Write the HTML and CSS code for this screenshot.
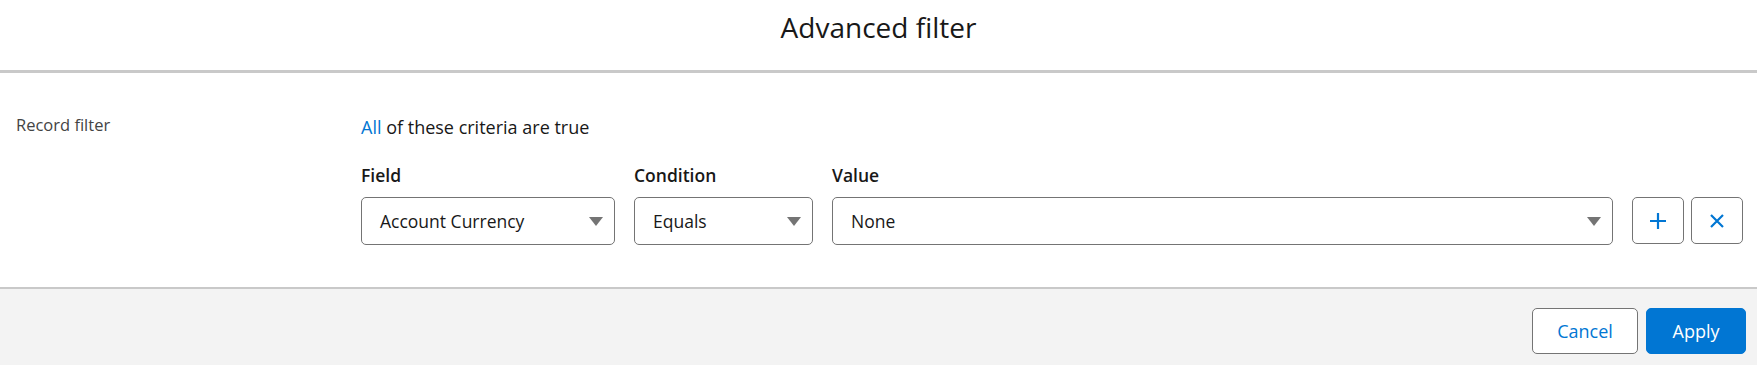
FILE: index.html
```html
<!DOCTYPE html>
<html lang="en">
<head>
    <meta charset="UTF-8">
    <title>Advanced filter</title>
    <link rel="stylesheet" href="styles.css">
</head>
<body>
    <div class="modal-header">
        <h1>Advanced filter</h1>
    </div>

    <div class="modal-body">
        <div class="section-label">Record filter</div>
        <div class="filter-content">
            <div class="logic-line"><a href="#" class="logic-link">All</a> of these criteria are true</div>
            <div class="criteria-row">
                <div class="field-group field-col">
                    <label>Field</label>
                    <div class="select-box">
                        <span>Account Currency</span>
                        <span class="caret"></span>
                    </div>
                </div>
                <div class="field-group condition-col">
                    <label>Condition</label>
                    <div class="select-box">
                        <span>Equals</span>
                        <span class="caret"></span>
                    </div>
                </div>
                <div class="field-group value-col">
                    <label>Value</label>
                    <div class="select-box">
                        <span>None</span>
                        <span class="caret"></span>
                    </div>
                </div>
                <div class="row-actions">
                    <button class="icon-btn" title="Add">
                        <svg width="18" height="18" viewBox="0 0 18 18"><path d="M9 1v16M1 9h16" stroke="#0176d3" stroke-width="2.2" fill="none"/></svg>
                    </button>
                    <button class="icon-btn" title="Remove">
                        <svg width="16" height="16" viewBox="0 0 16 16"><path d="M2 2l12 12M14 2L2 14" stroke="#0176d3" stroke-width="2.2" fill="none"/></svg>
                    </button>
                </div>
            </div>
        </div>
    </div>

    <div class="modal-footer">
        <button class="btn btn-neutral">Cancel</button>
        <button class="btn btn-brand">Apply</button>
    </div>
</body>
</html>
```

FILE: styles.css
```css
body {
    margin: 0;
    font-family: "Open Sans", "Noto Sans", Arial, sans-serif;
    color: #181818;
    background-color: white;
}
.modal-header {
    height: 70px;
    border-bottom: 3px solid #c9c9c9;
    display: flex;
    justify-content: center;
    align-items: flex-start;
}
.modal-header h1 {
    margin: 0;
    padding-top: 8px;
    font-size: 28px;
    font-weight: 400;
    line-height: 38px;
}
.modal-body {
    display: flex;
    height: 214px;
    padding-left: 16px;
    padding-right: 14px;
}
.section-label {
    width: 345px;
    padding-top: 40px;
    font-size: 16.5px;
    color: #444;
    line-height: 24px;
}
.filter-content {
    flex: 1;
    padding-top: 42px;
}
.logic-line {
    font-size: 18px;
    line-height: 24px;
}
.logic-link {
    color: #0176d3;
    text-decoration: none;
}
.criteria-row {
    display: flex;
    align-items: flex-end;
    gap: 19px;
    margin-top: 25px;
}
.field-group label {
    display: block;
    font-size: 17.5px;
    font-weight: 600;
    line-height: 22px;
    margin-bottom: 11px;
}
.field-col { width: 254px; }
.condition-col { width: 179px; }
.value-col { flex: 1; }
.select-box {
    height: 48px;
    box-sizing: border-box;
    border: 1px solid #747474;
    border-radius: 5px;
    display: flex;
    align-items: center;
    justify-content: space-between;
    padding: 0 11px 0 18px;
    font-size: 17.5px;
}
.caret {
    width: 0;
    height: 0;
    border-left: 7.5px solid transparent;
    border-right: 7.5px solid transparent;
    border-top: 9px solid #747474;
}
.row-actions {
    display: flex;
    gap: 7px;
    margin-bottom: 1px;
}
.icon-btn {
    width: 52px;
    height: 47px;
    border: 1px solid #747474;
    border-radius: 5px;
    background: white;
    display: flex;
    align-items: center;
    justify-content: center;
    padding: 0;
}
.modal-footer {
    border-top: 2px solid #c9c9c9;
    background-color: #f3f3f3;
    height: 78px;
    display: flex;
    justify-content: flex-end;
    align-items: flex-start;
    gap: 8px;
    padding: 19px 11px 0 0;
    box-sizing: border-box;
}
.btn {
    height: 46px;
    border-radius: 5px;
    font-family: inherit;
    font-size: 18px;
    padding: 0;
}
.btn-neutral {
    width: 106px;
    background: white;
    border: 1px solid #747474;
    color: #0176d3;
}
.btn-brand {
    width: 100px;
    background: #0176d3;
    border: 1px solid #0176d3;
    color: white;
}
```
